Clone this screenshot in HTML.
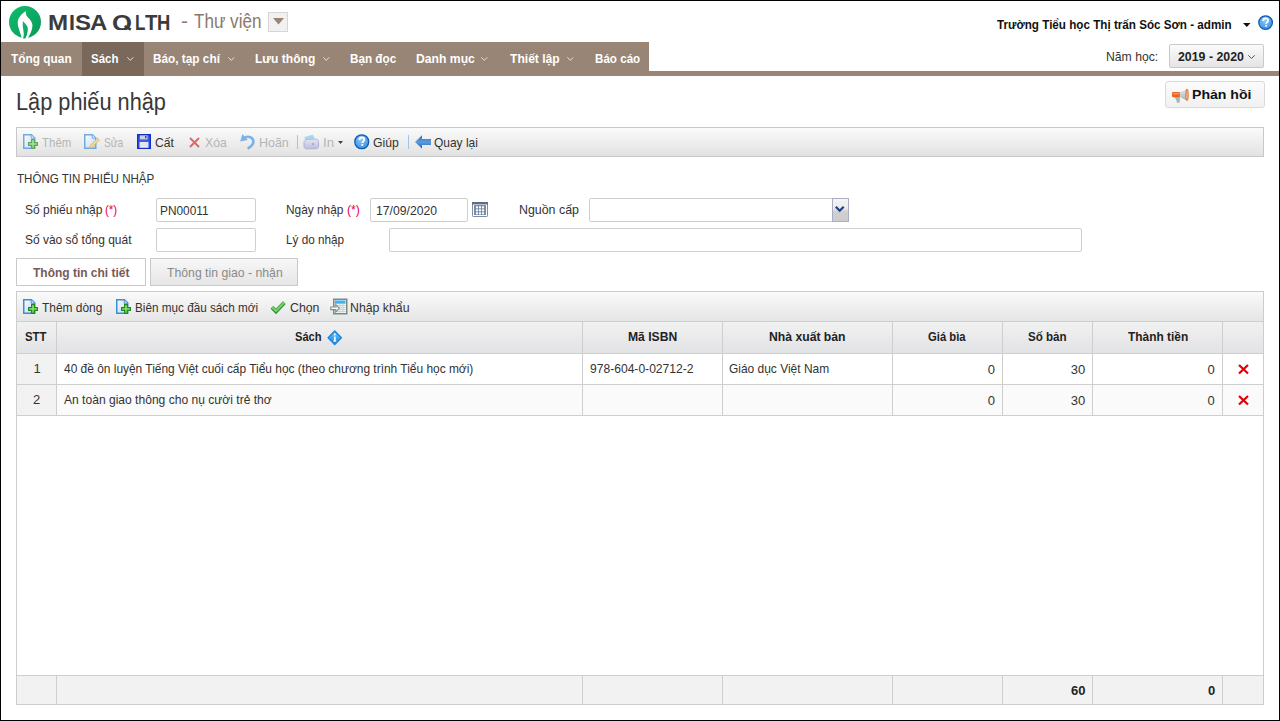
<!DOCTYPE html>
<html><head><meta charset="utf-8">
<style>
html,body{margin:0;padding:0;background:#fff;}
body{width:1280px;height:721px;position:relative;overflow:hidden;font-family:"Liberation Sans",sans-serif;}
.a{position:absolute;box-sizing:border-box;}
.t{position:absolute;white-space:nowrap;transform-origin:0 0;font-family:"Liberation Sans",sans-serif;}
.inp{position:absolute;box-sizing:border-box;border:1px solid #cfcfcf;border-radius:2px;background:#fff;}
.vl{position:absolute;width:1px;background:#cecece;}
.hl{position:absolute;height:1px;background:#cecece;}
svg{position:absolute;overflow:visible;}
</style></head><body>
<svg width="0" height="0" style="position:absolute;left:0;top:0">
<defs>
 <linearGradient id="docg" x1="0" y1="0" x2="1" y2="1"><stop offset="0" stop-color="#ffffff"/><stop offset="1" stop-color="#b9d4f2"/></linearGradient>
 <linearGradient id="plusg" x1="0" y1="0" x2="0" y2="1"><stop offset="0" stop-color="#a6ea90"/><stop offset="1" stop-color="#6fcf5c"/></linearGradient>
 <symbol id="doc" viewBox="0 0 16 16">
  <path d="M0.75,1.75 H8.4 L11.75,5.1 V15.25 H0.75 Z" fill="url(#docg)" stroke="#3a8ddb" stroke-width="1.5"/>
  <path d="M8.2,1.9 V5.3 H11.6" fill="#cfe2f6" stroke="#3a8ddb" stroke-width="0.9"/>
 </symbol>
 <symbol id="addDoc" viewBox="0 0 16 16">
  <use href="#doc"/>
  <path d="M8.6,6.6 H11.4 V9.6 H14.4 V12.4 H11.4 V15.4 H8.6 V12.4 H5.6 V9.6 H8.6 Z" fill="url(#plusg)" stroke="#1f8a1f" stroke-width="1.2"/>
 </symbol>
 <symbol id="editDoc" viewBox="0 0 16 16">
  <use href="#doc"/>
  <path d="M6.2,12.8 L13.4,5.2 L15.3,7 L8,14.6 L5.6,15.3 Z" fill="#f3d36a" stroke="#c99a2c" stroke-width="0.8"/>
 </symbol>
</defs></svg>
<!-- frame -->
<div class="a" style="left:0;top:0;width:1280px;height:721px;border:1px solid #000;z-index:50;pointer-events:none"></div>

<!-- logo -->
<svg style="left:9px;top:5.7px" width="32" height="32" viewBox="0 0 32 32">
 <defs><linearGradient id="lg" x1="0" y1="0" x2="1" y2="1"><stop offset="0" stop-color="#10bd6e"/><stop offset="1" stop-color="#089a58"/></linearGradient></defs>
 <circle cx="16" cy="16" r="16" fill="url(#lg)"/>
 <path d="M16.5,5 C15,6.5 9.5,10 8.8,15.5 C8.2,21 11.5,26 12.6,32 L19,32 C21,28 23.6,24 23.4,19 C23.2,15 19.5,12.5 17.6,9.8 C17,8.6 17,6.6 16.5,5 Z" fill="#fff"/>
 <path d="M13.9,15 C13,19 14.6,24 14.8,28 C14.8,30 14.3,31.5 13.8,32.6 L16.4,32.6 C18.2,29 19,25 18.7,22 C18.4,19 15.2,17 13.9,15 Z" fill="url(#lg)"/>
</svg>
<svg style="left:0;top:0" width="1" height="1"><path d="M124.6,26 L130.8,29.6" stroke="#3b3b3b" stroke-width="2.6"/></svg>
<!-- app dropdown -->
<div class="a" style="left:268px;top:12px;width:20px;height:20px;border:1px solid #d6d6d6;background:#f1f1f1"></div>
<svg style="left:272.5px;top:18px" width="11" height="6.5" viewBox="0 0 11 6.5"><path d="M0,0 L11,0 L5.5,6.5 Z" fill="#9b8472"/></svg>

<!-- header right -->
<svg style="left:1243px;top:23px" width="7.5" height="4" viewBox="0 0 7.5 4"><path d="M0,0 L7.5,0 L3.75,4 Z" fill="#111"/></svg>
<svg style="left:1257.6px;top:14.8px" width="15.2" height="15.2" viewBox="0 0 16 16">
 <defs><radialGradient id="hg" cx="0.45" cy="0.35" r="0.7"><stop offset="0" stop-color="#8cc6f7"/><stop offset="1" stop-color="#3a8de0"/></radialGradient></defs>
 <circle cx="8" cy="8" r="7.2" fill="url(#hg)" stroke="#0b5ab4" stroke-width="1.3"/>
 <path d="M5.5,6.2 C5.5,4.5 6.7,3.6 8,3.6 C9.5,3.6 10.6,4.6 10.6,5.9 C10.6,7.5 8.6,7.7 8.6,9.3" fill="none" stroke="#fff" stroke-width="2"/>
 <rect x="7.6" y="10.4" width="1.9" height="1.8" fill="#fff"/>
</svg>
<div class="a" style="left:1169px;top:44px;width:95px;height:24px;border:1px solid #c9c9c9;border-radius:2px;background:linear-gradient(#fbfbfb,#e4e4e4)"></div>
<svg style="left:1248px;top:55px" width="7" height="4" viewBox="0 0 7 4"><path d="M0.3,0.3 L3.5,3.5 L6.7,0.3" fill="none" stroke="#555" stroke-width="1"/></svg>

<!-- menu -->
<div class="a" style="left:1px;top:71px;width:1278px;height:5px;background:#998575"></div>
<div class="a" style="left:1px;top:42px;width:648px;height:34px;background:#998575"></div>
<div class="a" style="left:82px;top:42px;width:62px;height:34px;background:#7a685a"></div>
<svg style="left:126.5px;top:57px" width="6.5" height="4" viewBox="0 0 6.5 4"><path d="M0.3,0.3 L3.25,3.4 L6.2,0.3" fill="none" stroke="#e8e0da" stroke-width="1"/></svg>
<svg style="left:228px;top:57px" width="6.5" height="4" viewBox="0 0 6.5 4"><path d="M0.3,0.3 L3.25,3.4 L6.2,0.3" fill="none" stroke="#e8e0da" stroke-width="1"/></svg>
<svg style="left:323px;top:57px" width="6.5" height="4" viewBox="0 0 6.5 4"><path d="M0.3,0.3 L3.25,3.4 L6.2,0.3" fill="none" stroke="#e8e0da" stroke-width="1"/></svg>
<svg style="left:481px;top:57px" width="6.5" height="4" viewBox="0 0 6.5 4"><path d="M0.3,0.3 L3.25,3.4 L6.2,0.3" fill="none" stroke="#e8e0da" stroke-width="1"/></svg>
<svg style="left:567px;top:57px" width="6.5" height="4" viewBox="0 0 6.5 4"><path d="M0.3,0.3 L3.25,3.4 L6.2,0.3" fill="none" stroke="#e8e0da" stroke-width="1"/></svg>

<!-- feedback button -->
<div class="a" style="left:1165px;top:81px;width:100px;height:27px;border:1px solid #dadada;border-radius:3px;background:linear-gradient(#fbfbfb,#f1f1f1)"></div>
<svg style="left:1171px;top:88px" width="18" height="16" viewBox="0 0 18 16">
 <defs><linearGradient id="cone" x1="0" y1="0" x2="0" y2="1"><stop offset="0" stop-color="#dfe8e8"/><stop offset="1" stop-color="#a9b8b8"/></linearGradient></defs>
 <path d="M3.2,8.8 H8.4 L9,11.4 L8.6,14.8 H6 L5,11.4 Z" fill="#a9b7b7"/>
 <rect x="1" y="3.9" width="8.4" height="5.4" rx="1.2" fill="#e5662a"/>
 <rect x="2" y="5" width="6" height="1.3" fill="#f39a62"/>
 <path d="M8.8,4.4 L15.6,1.3 L15.6,12.4 L8.8,9 Z" fill="url(#cone)"/>
 <ellipse cx="16" cy="6.85" rx="1.1" ry="5.6" fill="#cfdada" stroke="#ea7433" stroke-width="1.2"/>
</svg>

<!-- main toolbar -->
<div class="a" style="left:16px;top:127px;width:1248px;height:30px;border:1px solid #c8c8c8;background:linear-gradient(#fafafa,#e2e2e2)"></div>
<!-- add icon (disabled) -->
<svg style="left:23px;top:133px;opacity:0.7" width="16" height="16" viewBox="0 0 16 16"><use href="#addDoc"/></svg>
<!-- edit icon (disabled) -->
<svg style="left:84px;top:133px;opacity:0.7" width="16" height="16" viewBox="0 0 16 16"><use href="#editDoc"/></svg>
<!-- save icon -->
<svg style="left:137px;top:134px" width="14" height="15" viewBox="0 0 14 15">
 <rect x="0.7" y="0.7" width="12.6" height="13.6" fill="#3b5ee8" stroke="#0f2fc8" stroke-width="1.4"/>
 <rect x="3" y="1.4" width="7.5" height="4" fill="#cfcfd6"/>
 <rect x="8" y="2" width="1.5" height="2.2" fill="#2448d0"/>
 <rect x="2.6" y="8" width="8.8" height="5.8" fill="#e6e6ea"/>
</svg>
<!-- delete icon (disabled) -->
<svg style="left:189px;top:137px;opacity:0.65" width="11" height="11" viewBox="0 0 11 11">
 <path d="M1,1 L10,10 M10,1 L1,10" stroke="#e02020" stroke-width="2"/>
</svg>
<!-- undo icon (disabled) -->
<svg style="left:239px;top:133px;opacity:0.65" width="16" height="17" viewBox="0 0 16 17">
 <path d="M5.5,4.6 C9.5,2.6 14.4,4.2 14.4,8.6 C14.4,12 11.5,14 8.6,15.6" fill="none" stroke="#3d95e4" stroke-width="2.6"/>
 <path d="M1.2,8.6 L3.4,1 L8.8,7 Z" fill="#3d95e4"/>
</svg>
<div class="a" style="left:297px;top:135px;width:1px;height:14px;background:#9cc6f0"></div>
<!-- print icon (disabled) -->
<svg style="left:303px;top:134px;opacity:0.8" width="17" height="16" viewBox="0 0 17 16">
 <defs><linearGradient id="prg" x1="0" y1="0" x2="0" y2="1"><stop offset="0" stop-color="#e2e2f4"/><stop offset="1" stop-color="#b2b4dc"/></linearGradient></defs>
 <path d="M1.8,3.4 L9.8,1.2 L11,5.6 L3,6.8 Z" fill="#92d4f2" stroke="#7cc0e2" stroke-width="0.6"/>
 <path d="M1,8.8 C1,6.8 2.2,5.6 4.4,5.4 L11.6,5 C14.2,4.8 15.6,6 15.6,8.6 L15.6,12 C15.6,14 14.4,14.8 12.4,14.8 L3.6,14.8 C1.8,14.8 1,13.8 1,12.2 Z" fill="url(#prg)" stroke="#9ea0d0" stroke-width="0.9"/>
 <rect x="9.4" y="9.4" width="1.3" height="1.3" fill="#5a5c8a"/>
</svg>
<svg style="left:337.5px;top:140.5px" width="5" height="3" viewBox="0 0 5 3"><path d="M0,0 L5,0 L2.5,3 Z" fill="#444"/></svg>
<!-- help icon -->
<svg style="left:354px;top:134px" width="15.5" height="15.5" viewBox="0 0 16 16">
 <defs><radialGradient id="hg2" cx="0.45" cy="0.35" r="0.7"><stop offset="0" stop-color="#8cc6f7"/><stop offset="1" stop-color="#3a8de0"/></radialGradient></defs>
 <circle cx="8" cy="8" r="7.2" fill="url(#hg2)" stroke="#0b5ab4" stroke-width="1.3"/>
 <path d="M5.5,6.2 C5.5,4.5 6.7,3.6 8,3.6 C9.5,3.6 10.6,4.6 10.6,5.9 C10.6,7.5 8.6,7.7 8.6,9.3" fill="none" stroke="#fff" stroke-width="2"/>
 <rect x="7.6" y="10.4" width="1.9" height="1.8" fill="#fff"/>
</svg>
<div class="a" style="left:408px;top:135px;width:1px;height:14px;background:#9cc6f0"></div>
<!-- back icon -->
<svg style="left:415px;top:135px" width="16" height="14" viewBox="0 0 16 14">
 <defs><linearGradient id="bg1" x1="0" y1="0" x2="0" y2="1"><stop offset="0" stop-color="#2a6fc0"/><stop offset="0.5" stop-color="#5c9be0"/><stop offset="1" stop-color="#2a64b2"/></linearGradient></defs>
 <path d="M0,7 L7,0.3 L7,4 L16,4 L16,10 L7,10 L7,13.7 Z" fill="url(#bg1)"/>
</svg>

<!-- form inputs -->
<div class="inp" style="left:156px;top:198px;width:100px;height:24px"></div>
<div class="inp" style="left:156px;top:228px;width:100px;height:24px"></div>
<div class="inp" style="left:370px;top:198px;width:98px;height:24px"></div>
<svg style="left:472px;top:202px" width="16" height="15" viewBox="0 0 16 15">
 <rect x="0.5" y="0.5" width="15" height="14" rx="0.8" fill="#fff" stroke="#7d8ca6" stroke-width="1"/>
 <rect x="0" y="0" width="16" height="2.4" fill="#5b6c88"/>
 <rect x="2" y="3" width="12" height="10" fill="#7b8ba6"/>
 <rect x="4" y="4.3" width="2" height="2" fill="#fff"/><rect x="7" y="4.3" width="2" height="2" fill="#fff"/><rect x="10" y="4.3" width="2" height="2" fill="#fff"/>
 <rect x="4" y="7.3" width="2" height="2" fill="#fff"/><rect x="7" y="7.3" width="2" height="2" fill="#fff"/><rect x="10" y="7.3" width="2" height="2" fill="#fff"/>
 <rect x="4" y="10.3" width="2" height="2" fill="#fff"/><rect x="7" y="10.3" width="2" height="2" fill="#fff"/><rect x="10" y="10.3" width="2" height="2" fill="#fff"/>
</svg>
<div class="inp" style="left:589px;top:198px;width:244px;height:24px;border-radius:2px 0 0 2px"></div>
<div class="a" style="left:832px;top:198px;width:17px;height:24px;border:1px solid #a9adc6;background:linear-gradient(#f4f4f4 0%,#ececec 40%,#cfcfcf 60%,#cdcdcd 100%)"></div>
<svg style="left:835px;top:205.5px" width="9.5" height="6" viewBox="0 0 9.5 6"><path d="M0.8,0.8 L4.75,4.8 L8.7,0.8" fill="none" stroke="#1d3f8c" stroke-width="2.2"/></svg>
<div class="inp" style="left:389px;top:228px;width:693px;height:24px"></div>

<!-- tabs -->
<div class="a" style="left:16px;top:258px;width:130px;height:28px;border:1px solid #c9c9c9;background:#fff"></div>
<div class="a" style="left:150px;top:258px;width:148px;height:28px;border:1px solid #c9c9c9;background:linear-gradient(#f7f7f7,#e6e6e6)"></div>

<!-- grid -->
<div class="a" style="left:16px;top:291px;width:1248px;height:414px;border:1px solid #cdcdcd;background:#fff"></div>
<div class="a" style="left:17px;top:292px;width:1246px;height:29px;background:linear-gradient(#fafafa,#e5e5e5)"></div>
<div class="hl" style="left:17px;top:321px;width:1246px"></div>
<div class="a" style="left:17px;top:322px;width:1246px;height:31px;background:linear-gradient(#f1f1f1,#e2e3e5)"></div>
<div class="hl" style="left:17px;top:353px;width:1246px"></div>
<div class="a" style="left:17px;top:385px;width:1246px;height:30px;background:#fafafa"></div>
<div class="a" style="left:17px;top:354px;width:39px;height:61px;background:#f2f2f2"></div>
<div class="hl" style="left:17px;top:384px;width:1246px"></div>
<div class="hl" style="left:17px;top:415px;width:1246px"></div>
<div class="a" style="left:17px;top:676px;width:1246px;height:28px;background:#f2f2f2"></div>
<div class="hl" style="left:17px;top:675px;width:1246px"></div>
<!-- column lines -->
<div class="vl" style="left:56px;top:322px;height:93px"></div>
<div class="vl" style="left:582px;top:322px;height:93px"></div>
<div class="vl" style="left:722px;top:322px;height:93px"></div>
<div class="vl" style="left:892px;top:322px;height:93px"></div>
<div class="vl" style="left:1002px;top:322px;height:93px"></div>
<div class="vl" style="left:1092px;top:322px;height:93px"></div>
<div class="vl" style="left:1222px;top:322px;height:93px"></div>
<div class="vl" style="left:56px;top:676px;height:28px"></div>
<div class="vl" style="left:582px;top:676px;height:28px"></div>
<div class="vl" style="left:722px;top:676px;height:28px"></div>
<div class="vl" style="left:892px;top:676px;height:28px"></div>
<div class="vl" style="left:1002px;top:676px;height:28px"></div>
<div class="vl" style="left:1092px;top:676px;height:28px"></div>
<div class="vl" style="left:1222px;top:676px;height:28px"></div>

<!-- grid toolbar icons -->
<svg style="left:23px;top:298px" width="16" height="16" viewBox="0 0 16 16"><use href="#addDoc"/></svg>
<svg style="left:115.5px;top:298px" width="16" height="16" viewBox="0 0 16 16"><use href="#addDoc"/></svg>
<svg style="left:269px;top:299px" width="17" height="15" viewBox="0 0 17 15">
 <path d="M3,8.3 L7,12.4 L15.3,3.6" fill="none" stroke="#2e8f2e" stroke-width="3.8" stroke-linejoin="miter"/>
 <path d="M3,8 L7,12 L15.2,3.3" fill="none" stroke="#79cf72" stroke-width="2.2" stroke-linejoin="miter"/>
</svg>
<svg style="left:330px;top:298px" width="18" height="17" viewBox="0 0 18 17">
 <rect x="3.75" y="1.25" width="13" height="14.5" fill="#eef5f7" stroke="#7b8989" stroke-width="1.5"/>
 <rect x="5" y="2.5" width="10.5" height="3.2" fill="#3fb3ef"/>
 <path d="M5,7.5 H15.5 M5,9.5 H15.5 M5,11.5 H15.5 M5,13.5 H15.5" stroke="#c9d3d3" stroke-width="1"/>
 <path d="M10,6 V14.5 M13,6 V14.5" stroke="#c9d3d3" stroke-width="1"/>
 <path d="M0.8,9 H5.8 V6.6 L9.2,10.3 L5.8,14 V11.6 H0.8 Z" fill="#fff" stroke="#7f8d8d" stroke-width="1.1"/>
</svg>
<!-- info diamond -->
<svg style="left:327px;top:329.8px" width="15.5" height="15.5" viewBox="0 0 16 16">
 <defs><linearGradient id="ig" x1="0" y1="0" x2="0" y2="1"><stop offset="0" stop-color="#7fcaf7"/><stop offset="1" stop-color="#0b7fdc"/></linearGradient></defs>
 <path d="M8,1.2 L14.8,8 L8,14.8 L1.2,8 Z" fill="url(#ig)" stroke="#1d8ae0" stroke-width="1.6" stroke-linejoin="round"/>
 <rect x="7.1" y="6.8" width="1.9" height="5" fill="#fff"/>
 <rect x="6.4" y="11" width="3.3" height="0.9" fill="#fff"/>
 <circle cx="8.05" cy="4.6" r="1" fill="#fff"/>
</svg>
<!-- delete X icons -->
<svg style="left:1238px;top:363.5px" width="11" height="10.5" viewBox="0 0 11 10.5"><path d="M1,1 L10,9.5 M10,1 L1,9.5" stroke="#e00000" stroke-width="2.2"/></svg>
<svg style="left:1238px;top:394.5px" width="11" height="10.5" viewBox="0 0 11 10.5"><path d="M1,1 L10,9.5 M10,1 L1,9.5" stroke="#e00000" stroke-width="2.2"/></svg>

<div class="t" style="left:47.65px;top:11.6px;font-weight:bold;font-size:22px;line-height:22px;color:#3b3b3b;transform:scaleX(1.0969);">M</div>
<div class="t" style="left:68.53px;top:11.6px;font-weight:bold;font-size:22px;line-height:22px;color:#3b3b3b;transform:scaleX(0.9750);">I</div>
<div class="t" style="left:75.01px;top:11.6px;font-weight:bold;font-size:22px;line-height:22px;color:#3b3b3b;transform:scaleX(1.0923);">S</div>
<div class="t" style="left:90.31px;top:11.6px;font-weight:bold;font-size:22px;line-height:22px;color:#3b3b3b;transform:scaleX(1.0929);">A</div>
<div style="position:absolute;left:0;top:0;width:1280px;height:30px;overflow:hidden"><div class="t" style="left:112.13px;top:11.6px;font-weight:bold;font-size:22px;line-height:22px;color:#3b3b3b;transform:scaleX(1.1667);">Q</div></div>
<div class="t" style="left:134.92px;top:11.6px;font-weight:bold;font-size:22px;line-height:22px;color:#3b3b3b;transform:scaleX(0.7750);">L</div>
<div class="t" style="left:145.00px;top:11.6px;font-weight:bold;font-size:22px;line-height:22px;color:#3b3b3b;transform:scaleX(0.9231);">T</div>
<div class="t" style="left:156.76px;top:11.6px;font-weight:bold;font-size:22px;line-height:22px;color:#3b3b3b;transform:scaleX(0.8357);">H</div>
<div class="t" style="left:180.96px;top:11.0px;font-weight:normal;font-size:20px;line-height:20px;color:#8c7868;transform:scaleX(1.0400);">-</div>
<div class="t" style="left:193.70px;top:11.0px;font-weight:normal;font-size:20px;line-height:20px;color:#8c7868;transform:scaleX(0.8538);">Thư viện</div>
<div class="t" style="left:997.00px;top:18.0px;font-weight:bold;font-size:13px;line-height:13px;color:#111;transform:scaleX(0.8966);">Trường Tiểu học Thị trấn Sóc Sơn - admin</div>
<div class="t" style="left:1106.06px;top:49.8px;font-weight:normal;font-size:13px;line-height:13px;color:#333;transform:scaleX(0.9389);">Năm học:</div>
<div class="t" style="left:1178.00px;top:49.8px;font-weight:bold;font-size:13px;line-height:13px;color:#222;transform:scaleX(0.9493);">2019 - 2020</div>
<div class="t" style="left:11.25px;top:52.0px;font-weight:bold;font-size:13px;line-height:13px;color:#fff;transform:scaleX(0.9129);">Tổng quan</div>
<div class="t" style="left:90.52px;top:52.0px;font-weight:bold;font-size:13px;line-height:13px;color:#fff;transform:scaleX(0.8833);">Sách</div>
<div class="t" style="left:153.09px;top:52.0px;font-weight:bold;font-size:13px;line-height:13px;color:#fff;transform:scaleX(0.9082);">Báo, tạp chí</div>
<div class="t" style="left:255.07px;top:52.0px;font-weight:bold;font-size:13px;line-height:13px;color:#fff;transform:scaleX(0.9270);">Lưu thông</div>
<div class="t" style="left:350.10px;top:52.0px;font-weight:bold;font-size:13px;line-height:13px;color:#fff;transform:scaleX(0.9000);">Bạn đọc</div>
<div class="t" style="left:415.66px;top:52.0px;font-weight:bold;font-size:13px;line-height:13px;color:#fff;transform:scaleX(0.9369);">Danh mục</div>
<div class="t" style="left:509.70px;top:52.0px;font-weight:bold;font-size:13px;line-height:13px;color:#fff;transform:scaleX(0.9302);">Thiết lập</div>
<div class="t" style="left:594.71px;top:52.0px;font-weight:bold;font-size:13px;line-height:13px;color:#fff;transform:scaleX(0.8939);">Báo cáo</div>
<div class="t" style="left:15.61px;top:90.8px;font-weight:normal;font-size:23px;line-height:23px;color:#383838;transform:scaleX(0.9455);">Lập phiếu nhập</div>
<div class="t" style="left:1191.92px;top:87.7px;font-weight:bold;font-size:13px;line-height:13px;color:#111;transform:scaleX(1.0830);">Phản hồi</div>
<div class="t" style="left:42.40px;top:136.0px;font-weight:normal;font-size:13px;line-height:13px;color:#b5b5b5;transform:scaleX(0.8818);">Thêm</div>
<div class="t" style="left:103.92px;top:136.0px;font-weight:normal;font-size:13px;line-height:13px;color:#b5b5b5;transform:scaleX(0.7833);">Sửa</div>
<div class="t" style="left:155.37px;top:136.0px;font-weight:normal;font-size:13px;line-height:13px;color:#333;transform:scaleX(0.9316);">Cất</div>
<div class="t" style="left:205.06px;top:136.0px;font-weight:normal;font-size:13px;line-height:13px;color:#b5b5b5;transform:scaleX(0.9409);">Xóa</div>
<div class="t" style="left:258.54px;top:136.0px;font-weight:normal;font-size:13px;line-height:13px;color:#b5b5b5;transform:scaleX(0.9586);">Hoãn</div>
<div class="t" style="left:323.48px;top:136.0px;font-weight:normal;font-size:13px;line-height:13px;color:#b5b5b5;transform:scaleX(1.0222);">In</div>
<div class="t" style="left:373.36px;top:136.0px;font-weight:normal;font-size:13px;line-height:13px;color:#333;transform:scaleX(0.9385);">Giúp</div>
<div class="t" style="left:434.38px;top:136.0px;font-weight:normal;font-size:13px;line-height:13px;color:#333;transform:scaleX(0.9196);">Quay lại</div>
<div class="t" style="left:17.00px;top:172.0px;font-weight:normal;font-size:13px;line-height:13px;color:#333;transform:scaleX(0.8896);">THÔNG TIN PHIẾU NHẬP</div>
<div class="t" style="left:25.38px;top:202.7px;font-weight:normal;font-size:13px;line-height:13px;color:#333;transform:scaleX(0.9232);">Số phiếu nhập</div>
<div class="t" style="left:105.41px;top:202.7px;font-weight:normal;font-size:13px;line-height:13px;color:#e8004a;transform:scaleX(0.8917);">(*)</div>
<div class="t" style="left:159.59px;top:204.0px;font-weight:normal;font-size:13px;line-height:13px;color:#333;transform:scaleX(0.9135);">PN00011</div>
<div class="t" style="left:285.99px;top:203.0px;font-weight:normal;font-size:13px;line-height:13px;color:#333;transform:scaleX(0.9129);">Ngày nhập</div>
<div class="t" style="left:346.76px;top:203.0px;font-weight:normal;font-size:13px;line-height:13px;color:#e8004a;transform:scaleX(0.9417);">(*)</div>
<div class="t" style="left:375.76px;top:203.6px;font-weight:normal;font-size:13px;line-height:13px;color:#333;transform:scaleX(0.9375);">17/09/2020</div>
<div class="t" style="left:518.75px;top:203.0px;font-weight:normal;font-size:13px;line-height:13px;color:#333;transform:scaleX(0.9532);">Nguồn cấp</div>
<div class="t" style="left:25.38px;top:232.7px;font-weight:normal;font-size:13px;line-height:13px;color:#333;transform:scaleX(0.9209);">Số vào sổ tổng quát</div>
<div class="t" style="left:286.00px;top:232.8px;font-weight:normal;font-size:13px;line-height:13px;color:#333;transform:scaleX(0.9016);">Lý do nhập</div>
<div class="t" style="left:32.90px;top:266.0px;font-weight:bold;font-size:13px;line-height:13px;color:#765a58;transform:scaleX(0.9210);">Thông tin chi tiết</div>
<div class="t" style="left:166.50px;top:266.0px;font-weight:normal;font-size:13px;line-height:13px;color:#8a8a8a;transform:scaleX(0.9418);">Thông tin giao - nhận</div>
<div class="t" style="left:42.30px;top:301.0px;font-weight:normal;font-size:13px;line-height:13px;color:#333;transform:scaleX(0.9185);">Thêm dòng</div>
<div class="t" style="left:134.85px;top:301.0px;font-weight:normal;font-size:13px;line-height:13px;color:#333;transform:scaleX(0.9019);">Biên mục đầu sách mới</div>
<div class="t" style="left:289.55px;top:301.0px;font-weight:normal;font-size:13px;line-height:13px;color:#333;transform:scaleX(0.9483);">Chọn</div>
<div class="t" style="left:350.05px;top:301.0px;font-weight:normal;font-size:13px;line-height:13px;color:#333;transform:scaleX(0.9467);">Nhập khẩu</div>
<div class="t" style="left:25.12px;top:329.8px;font-weight:bold;font-size:13px;line-height:13px;color:#222;transform:scaleX(0.8750);">STT</div>
<div class="t" style="left:295.04px;top:329.8px;font-weight:bold;font-size:13px;line-height:13px;color:#222;transform:scaleX(0.8567);">Sách</div>
<div class="t" style="left:627.82px;top:329.8px;font-weight:bold;font-size:13px;line-height:13px;color:#222;transform:scaleX(0.9343);">Mã ISBN</div>
<div class="t" style="left:769.26px;top:329.8px;font-weight:bold;font-size:13px;line-height:13px;color:#222;transform:scaleX(0.9375);">Nhà xuất bản</div>
<div class="t" style="left:928.30px;top:329.8px;font-weight:bold;font-size:13px;line-height:13px;color:#222;transform:scaleX(0.8659);">Giá bìa</div>
<div class="t" style="left:1027.86px;top:329.8px;font-weight:bold;font-size:13px;line-height:13px;color:#222;transform:scaleX(0.8917);">Số bản</div>
<div class="t" style="left:1127.90px;top:329.8px;font-weight:bold;font-size:13px;line-height:13px;color:#222;transform:scaleX(0.9154);">Thành tiền</div>
<div class="t" style="left:33.50px;top:362.3px;font-weight:normal;font-size:13px;line-height:13px;color:#333;">1</div>
<div class="t" style="left:64.00px;top:362.3px;font-weight:normal;font-size:13px;line-height:13px;color:#333;transform:scaleX(0.9175);">40 đề ôn luyện Tiếng Việt cuối cấp Tiểu học (theo chương trình Tiểu học mới)</div>
<div class="t" style="left:589.57px;top:362.3px;font-weight:normal;font-size:13px;line-height:13px;color:#333;transform:scaleX(0.9300);">978-604-0-02712-2</div>
<div class="t" style="left:729.48px;top:362.3px;font-weight:normal;font-size:13px;line-height:13px;color:#333;transform:scaleX(0.9196);">Giáo dục Việt Nam</div>
<div class="t" style="left:987.70px;top:363.3px;font-weight:normal;font-size:13px;line-height:13px;color:#333;">0</div>
<div class="t" style="left:1070.70px;top:363.3px;font-weight:normal;font-size:13px;line-height:13px;color:#333;">30</div>
<div class="t" style="left:1207.40px;top:363.3px;font-weight:normal;font-size:13px;line-height:13px;color:#333;">0</div>
<div class="t" style="left:33.00px;top:393.4px;font-weight:normal;font-size:13px;line-height:13px;color:#333;">2</div>
<div class="t" style="left:64.00px;top:393.4px;font-weight:normal;font-size:13px;line-height:13px;color:#333;transform:scaleX(0.9281);">An toàn giao thông cho nụ cười trẻ thơ</div>
<div class="t" style="left:987.70px;top:394.4px;font-weight:normal;font-size:13px;line-height:13px;color:#333;">0</div>
<div class="t" style="left:1070.70px;top:394.4px;font-weight:normal;font-size:13px;line-height:13px;color:#333;">30</div>
<div class="t" style="left:1207.40px;top:394.4px;font-weight:normal;font-size:13px;line-height:13px;color:#333;">0</div>
<div class="t" style="left:1071.00px;top:683.5px;font-weight:bold;font-size:13px;line-height:13px;color:#222;">60</div>
<div class="t" style="left:1208.00px;top:683.5px;font-weight:bold;font-size:13px;line-height:13px;color:#222;">0</div>
</body></html>
